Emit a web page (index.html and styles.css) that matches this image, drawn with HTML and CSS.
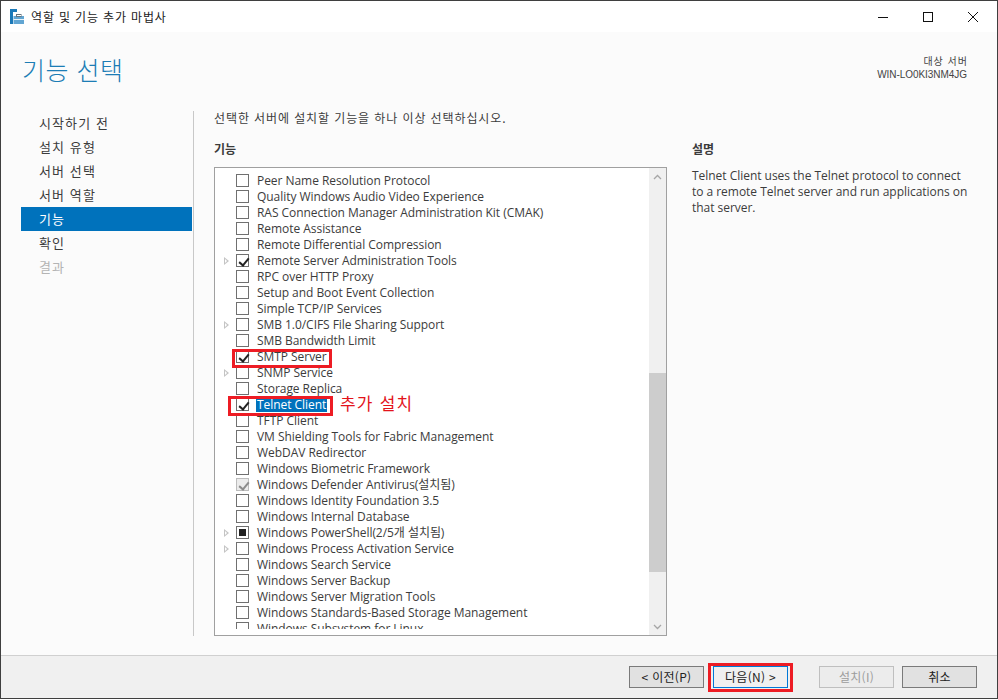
FILE: index.html
```html
<!DOCTYPE html>
<html lang="ko">
<head>
<meta charset="utf-8">
<title>역할 및 기능 추가 마법사</title>
<link rel="stylesheet" href="styles.css">
</head>
<body>
<div class="window">
  <div class="titlebar">
    <svg class="appicon" width="14" height="15" viewBox="0 0 14 15"><path d="M0 0H7V3H3V15H0Z" fill="#1b79b8"/><rect x="3.500" y="7" width="10.500" height="8" fill="#62a6d3"/><rect x="3.500" y="10" width="10.500" height="1" fill="#eaf3f9"/><rect x="6.500" y="5.500" width="4.500" height="2" fill="none" stroke="#66757f"/></svg>
    <span class="wintitle">역할 및 기능 추가 마법사</span>
    <div class="winctl">
      <svg width="12" height="12" viewBox="0 0 12 12"><path d="M1 6.500H11" stroke="#111" fill="none"/></svg>
      <svg width="12" height="12" viewBox="0 0 12 12"><rect x="1.500" y="1.500" width="9" height="9" stroke="#111" fill="none"/></svg>
      <svg width="12" height="12" viewBox="0 0 12 12"><path d="M1 1L11 11M11 1L1 11" stroke="#111" fill="none"/></svg>
    </div>
  </div>
  <div class="content">
    <header class="head">
      <h1 class="pagetitle">기능 선택</h1>
      <div class="target"><div class="target-label">대상 서버</div><div class="target-name">WIN-LO0KI3NM4JG</div></div>
    </header>
    <div class="body">
      <nav class="side">
        <div class="step">시작하기 전</div>
        <div class="step">설치 유형</div>
        <div class="step">서버 선택</div>
        <div class="step">서버 역할</div>
        <div class="step active">기능</div>
        <div class="step">확인</div>
        <div class="step off">결과</div>
      </nav>
      <main class="main">
        <p class="lead">선택한 서버에 설치할 기능을 하나 이상 선택하십시오.</p>
        <div class="cols">
          <section class="featcol">
            <h2 class="sect">기능</h2>
            <div class="listbox">
              <div class="rows">
                <div class="row"><i class="exp"></i><i class="cb"></i><span>Peer Name Resolution Protocol</span></div>
                <div class="row"><i class="exp"></i><i class="cb"></i><span>Quality Windows Audio Video Experience</span></div>
                <div class="row"><i class="exp"></i><i class="cb"></i><span>RAS Connection Manager Administration Kit (CMAK)</span></div>
                <div class="row"><i class="exp"></i><i class="cb"></i><span>Remote Assistance</span></div>
                <div class="row"><i class="exp"></i><i class="cb"></i><span>Remote Differential Compression</span></div>
                <div class="row"><i class="exp on"></i><i class="cb chk"></i><span>Remote Server Administration Tools</span></div>
                <div class="row"><i class="exp"></i><i class="cb"></i><span>RPC over HTTP Proxy</span></div>
                <div class="row"><i class="exp"></i><i class="cb"></i><span>Setup and Boot Event Collection</span></div>
                <div class="row"><i class="exp"></i><i class="cb"></i><span>Simple TCP/IP Services</span></div>
                <div class="row"><i class="exp on"></i><i class="cb"></i><span>SMB 1.0/CIFS File Sharing Support</span></div>
                <div class="row"><i class="exp"></i><i class="cb"></i><span>SMB Bandwidth Limit</span></div>
                <div class="row"><i class="exp"></i><i class="cb chk"></i><span>SMTP Server</span></div>
                <div class="row"><i class="exp on"></i><i class="cb"></i><span>SNMP Service</span></div>
                <div class="row"><i class="exp"></i><i class="cb"></i><span>Storage Replica</span></div>
                <div class="row"><i class="exp"></i><i class="cb chk"></i><span class="sel">Telnet Client</span></div>
                <div class="row"><i class="exp"></i><i class="cb"></i><span>TFTP Client</span></div>
                <div class="row"><i class="exp"></i><i class="cb"></i><span>VM Shielding Tools for Fabric Management</span></div>
                <div class="row"><i class="exp"></i><i class="cb"></i><span>WebDAV Redirector</span></div>
                <div class="row"><i class="exp"></i><i class="cb"></i><span>Windows Biometric Framework</span></div>
                <div class="row"><i class="exp"></i><i class="cb dis"></i><span>Windows Defender Antivirus(설치됨)</span></div>
                <div class="row"><i class="exp"></i><i class="cb"></i><span>Windows Identity Foundation 3.5</span></div>
                <div class="row"><i class="exp"></i><i class="cb"></i><span>Windows Internal Database</span></div>
                <div class="row"><i class="exp on"></i><i class="cb part"></i><span>Windows PowerShell(2/5개 설치됨)</span></div>
                <div class="row"><i class="exp on"></i><i class="cb"></i><span>Windows Process Activation Service</span></div>
                <div class="row"><i class="exp"></i><i class="cb"></i><span>Windows Search Service</span></div>
                <div class="row"><i class="exp"></i><i class="cb"></i><span>Windows Server Backup</span></div>
                <div class="row"><i class="exp"></i><i class="cb"></i><span>Windows Server Migration Tools</span></div>
                <div class="row"><i class="exp"></i><i class="cb"></i><span>Windows Standards-Based Storage Management</span></div>
                <div class="row"><i class="exp"></i><i class="cb"></i><span>Windows Subsystem for Linux</span></div>
              </div>
              <div class="scrollbar">
                <svg class="arrow up" width="9" height="6" viewBox="0 0 9 6"><path d="M1 5L4.500 1.500L8 5" stroke="#a6a6a6" stroke-width="1.300" fill="none"/></svg>
                <div class="thumb"></div>
                <svg class="arrow down" width="9" height="6" viewBox="0 0 9 6"><path d="M1 1L4.500 4.500L8 1" stroke="#a6a6a6" stroke-width="1.300" fill="none"/></svg>
              </div>
            </div>
            <div class="mark mark-smtp"></div>
            <div class="mark mark-telnet"></div>
            <div class="note">추가 설치</div>
          </section>
          <aside class="desc">
            <h2 class="sect">설명</h2>
            <p class="desctext">Telnet Client uses the Telnet protocol to connect to a remote Telnet server and run applications on that server.</p>
          </aside>
        </div>
      </main>
    </div>
  </div>
  <footer class="foot">
    <button class="btn prev">&lt; 이전(P)</button>
    <span class="nextwrap"><button class="btn next">다음(N) &gt;</button></span>
    <button class="btn install" disabled>설치(I)</button>
    <button class="btn cancel">취소</button>
  </footer>
</div>
</body>
</html>
```
FILE: styles.css
```css
* { box-sizing: border-box; }
html, body { margin: 0; padding: 0; background: #fff; }
body {
  width: 998px;
  height: 700px;
  overflow: hidden;
  font-family: "Open Sans", "Noto Sans CJK KR", sans-serif;
  font-size: 12px;
  color: #3c3c3c;
}
.window {
  width: 998px;
  height: 699px;
  border: 1px solid #3f3f3f;
  display: flex;
  flex-direction: column;
}
.titlebar {
  height: 31px;
  flex: none;
  background: #fff;
  display: flex;
  align-items: center;
  padding-left: 9px;
  color: #222;
}
.appicon { flex: none; }
.wintitle { margin-left: 7px; font-family: "Noto Sans CJK KR", sans-serif; font-size: 12px; letter-spacing: 0.85px; }
.winctl { margin-left: auto; display: flex; gap: 33px; padding-right: 18px; }
.content { flex: 1; background: #fbfbfb; display: flex; flex-direction: column; min-height: 0; }
.head { height: 79px; flex: none; display: flex; justify-content: space-between; padding: 19px 30px 0 21px; }
.pagetitle {
  margin: 0;
  font-family: "Noto Sans CJK KR", sans-serif;
  font-weight: 300;
  font-size: 25px;
  line-height: 36px;
  color: #1c7db5;
  letter-spacing: 0.5px;
}
.target { text-align: right; font-size: 10px; line-height: 14px; padding-top: 3px; color: #444; }
.target-label { font-family: "Noto Sans CJK KR", sans-serif; letter-spacing: 1px; margin-right: -1px; }
.target-name { font-family: "Liberation Sans", sans-serif; letter-spacing: -0.05px; }
.body { flex: 1; display: flex; min-height: 0; padding-bottom: 19px; }
.side { width: 171px; margin-left: 20px; margin-right: 1px; flex: none; }
.step { height: 24px; line-height: 24px; padding-left: 18px; font-family: "Noto Sans CJK KR", sans-serif; font-size: 13px; letter-spacing: 1.1px; }
.step.active { background: #0072bc; color: #fff; }
.step.off { color: #b4b4b4; }
.main { flex: 1; border-left: 1px solid #c8c8c8; padding-left: 20px; min-width: 0; display: flex; flex-direction: column; }
.lead { margin: 0; height: 30px; line-height: 13px; font-family: "Noto Sans CJK KR", sans-serif; letter-spacing: 0.9px; }
.cols { flex: 1; display: flex; min-height: 0; }
.featcol { width: 453px; flex: none; position: relative; display: flex; flex-direction: column; }
.sect { margin: 0; height: 26px; font-size: 12px; line-height: 15px; font-weight: 700; font-family: "Noto Sans CJK KR", sans-serif; color: #3c3c3c; }
.listbox { flex: 1; border: 1px solid #a0a0a0; background: #fff; display: flex; min-height: 0; }
.rows { flex: 1; margin: 5px 0 6px; overflow: hidden; min-width: 0; letter-spacing: -0.05px; }
.row { height: 16px; display: flex; align-items: center; white-space: nowrap; padding-left: 8px; }
.row span { line-height: 14px; height: 14px; }
.sel { background: #0072bc; color: #fff; padding: 0 1px; margin-left: -1px; }
.exp { width: 13px; height: 16px; flex: none; position: relative; }
.exp.on::before {
  content: "";
  position: absolute;
  left: 1px;
  top: 4px;
  border-left: 5px solid #c4c4c4;
  border-top: 4px solid transparent;
  border-bottom: 4px solid transparent;
}
.exp.on::after {
  content: "";
  position: absolute;
  left: 2px;
  top: 6px;
  border-left: 2px solid #fff;
  border-top: 2px solid transparent;
  border-bottom: 2px solid transparent;
}
.cb { width: 13px; height: 13px; flex: none; border: 1px solid #707070; background: #fff; margin: -1px 8px 0 0; position: relative; }
.cb.chk::after, .cb.dis::after {
  content: "";
  position: absolute;
  left: 3.500px;
  top: 0.500px;
  width: 4px;
  height: 8px;
  border-right: 2px solid #222;
  border-bottom: 2px solid #222;
  transform: rotate(40deg);
}
.cb.dis { border-color: #bcbcbc; background: #ececec; }
.cb.dis::after { border-color: #8c8c8c; }
.cb.part::after { content: ""; position: absolute; left: 2px; top: 2px; width: 7px; height: 7px; background: #222; }
.scrollbar { width: 17px; flex: none; background: #f0f0f0; position: relative; display: flex; flex-direction: column; }
.thumb { position: absolute; left: 0; right: 0; top: 205px; height: 199px; background: #cdcdcd; }
.arrow { position: absolute; left: 4px; }
.arrow.up { top: 6px; }
.arrow.down { bottom: 5px; }
.mark { position: absolute; border: 3px solid #ed1c24; pointer-events: none; }
.mark-smtp { left: 18px; top: 208px; width: 100px; height: 19px; }
.mark-telnet { left: 14px; top: 255px; width: 105px; height: 20px; }
.note { position: absolute; left: 126px; top: 250px; font-family: "Noto Sans CJK KR", sans-serif; font-size: 17px; line-height: 24px; color: #e3131b; letter-spacing: 1.2px; }
.desc { flex: 1; padding-left: 25px; padding-right: 26px; }
.desc .sect { height: 27px; }
.desctext { margin: 0; line-height: 16px; font-size: 12px; letter-spacing: -0.03px; }
.foot { height: 43px; flex: none; background: #f0f0f0; border-top: 1px solid #d0d0d0; display: flex; align-items: center; padding-left: 628px; }
.btn {
  width: 75px;
  height: 22px;
  padding: 0;
  background: #e1e1e1;
  border: 1px solid #7a7a7a;
  font-family: "Noto Sans CJK KR", sans-serif;
  font-size: 12px;
  line-height: 18px;
  letter-spacing: 0.3px;
  color: #222;
}
.nextwrap { border: 3px solid #ed1c24; width: 85px; height: 29px; margin-left: 4px; display: flex; align-items: center; justify-content: center; flex: none; }
.next { background: #f0f0f0; border-color: #0078d7; width: 75px; }
.install { margin-left: 26px; color: #9c9c9c; background: #ececec; border-color: #bfbfbf; }
.cancel { margin-left: 8px; }
```
